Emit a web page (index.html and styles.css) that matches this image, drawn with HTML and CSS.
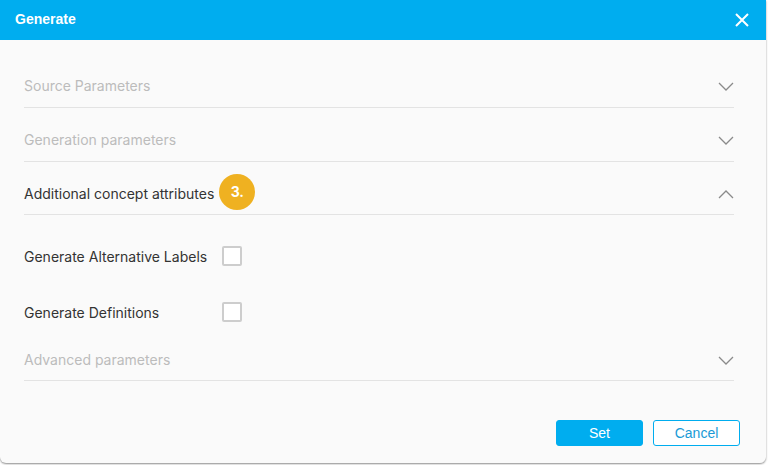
FILE: index.html
```html
<!DOCTYPE html>
<html>
<head>
<meta charset="utf-8">
<link rel="stylesheet" href="styles.css">
</head>
<body>
<div class="dialog">
  <div class="header">
    <span class="title">Generate</span>
    <svg class="close" width="14" height="14" viewBox="0 0 14 14"><path d="M1 1L13 13M13 1L1 13" stroke="#fff" stroke-width="2" fill="none"/></svg>
  </div>
  <div class="content">
    <div class="section muted first">
      <span class="label">Source Parameters</span>
      <svg class="chev" width="16" height="9" viewBox="0 0 16 9"><path d="M1 1L8 8L15 1" stroke="#8a8a8a" stroke-width="1.3" fill="none"/></svg>
    </div>
    <div class="section muted">
      <span class="label">Generation parameters</span>
      <svg class="chev" width="16" height="9" viewBox="0 0 16 9"><path d="M1 1L8 8L15 1" stroke="#8a8a8a" stroke-width="1.3" fill="none"/></svg>
    </div>
    <div class="section active third">
      <span class="label">Additional concept attributes</span>
      <span class="badge">3.</span>
      <svg class="chev" width="16" height="9" viewBox="0 0 16 9"><path d="M1 8L8 1L15 8" stroke="#8a8a8a" stroke-width="1.3" fill="none"/></svg>
    </div>
    <div class="option opt1">
      <span class="opt-label">Generate Alternative Labels</span>
      <span class="checkbox"></span>
    </div>
    <div class="option opt2">
      <span class="opt-label">Generate Definitions</span>
      <span class="checkbox"></span>
    </div>
    <div class="section muted adv">
      <span class="label">Advanced parameters</span>
      <svg class="chev" width="16" height="9" viewBox="0 0 16 9"><path d="M1 1L8 8L15 1" stroke="#8a8a8a" stroke-width="1.3" fill="none"/></svg>
    </div>
  </div>
  <div class="footer">
    <button class="btn primary">Set</button>
    <button class="btn secondary">Cancel</button>
  </div>
</div>
</body>
</html>
```
FILE: styles.css
```css
html, body {
  margin: 0;
  padding: 0;
  background: #ffffff;
}
body {
  width: 768px;
  height: 465px;
  overflow: hidden;
}
.dialog {
  width: 766px;
  height: 463px;
  background: #fafafa;
  border-radius: 0 0 6px 6px;
  box-shadow: 0 1px 2px rgba(0,0,0,0.45);
  display: flex;
  flex-direction: column;
  overflow: hidden;
}
.header {
  height: 40px;
  background: #00adef;
  display: flex;
  align-items: center;
  justify-content: space-between;
  padding: 0 17px 0 15px;
  flex-shrink: 0;
}
.title {
  color: #fff;
  font-family: "Liberation Sans", Arial, sans-serif;
  font-weight: bold;
  font-size: 14px;
  margin-top: -2px;
}
.close {
  display: block;
  margin-top: -1px;
}
.content {
  padding: 14px 32px 0 24px;
  font-family: Inter, "Noto Sans", sans-serif;
  font-size: 14px;
}
.section {
  display: flex;
  align-items: center;
  height: 20px;
  line-height: 20px;
  padding: 22px 0 11px 0;
  border-bottom: 1px solid #e3e3e3;
}
.section.first {
  padding-top: 22px;
}
.section.third {
  padding-bottom: 10px;
}
.section .label {
  flex: 0 0 auto;
}
.muted {
  color: #bcbcbc;
}
.active {
  color: #333;
}
.chev {
  margin-left: auto;
  display: block;
}
.badge {
  width: 36px;
  height: 36px;
  border-radius: 50%;
  background: #efb121;
  color: #fff;
  font-weight: 700;
  font-size: 14px;
  display: flex;
  align-items: center;
  justify-content: center;
  margin: -16px 0 -16px 5px;
  position: relative;
  top: -2px;
}
.option {
  display: flex;
  align-items: center;
  height: 20px;
  color: #333;
}
.opt1 {
  margin-top: 31px;
}
.opt2 {
  margin-top: 36px;
}
.opt-label {
  width: 198px;
}
.checkbox {
  width: 16px;
  height: 16px;
  border: 2px solid #cdcdcd;
  border-radius: 2px;
  background: #fff;
}
.section.adv {
  padding-top: 28px;
  padding-bottom: 10px;
}
.footer {
  margin-top: auto;
  display: flex;
  justify-content: flex-end;
  gap: 10px;
  padding: 0 26px 17px 0;
}
.btn {
  width: 87px;
  height: 26px;
  border-radius: 3px;
  font-family: "Liberation Sans", Arial, sans-serif;
  font-size: 14px;
  padding: 0;
  cursor: pointer;
}
.primary {
  background: #00adef;
  border: 1px solid #00adef;
  color: #fff;
}
.secondary {
  background: #fff;
  border: 1px solid #00adef;
  color: #1a9ad6;
}
```
